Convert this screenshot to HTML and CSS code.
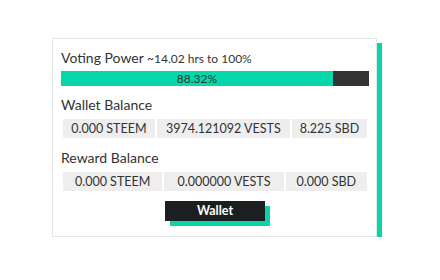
FILE: index.html
```html
<!DOCTYPE html>
<html>
<head>
    <title>Steem Wallet</title>
    <link rel="stylesheet" href="styles.css">
</head>
<body>
    <div class="card">
        <div class="title">Voting Power <small>~14.02 hrs to 100%</small></div>
        <div class="bar">
            <div class="fill" style="width: 88.32%">88.32%</div>
        </div>

        <div class="title gap">Wallet Balance</div>
        <table class="balances">
            <tr>
                <td>0.000 STEEM</td>
                <td>3974.121092 VESTS</td>
                <td>8.225 SBD</td>
            </tr>
        </table>

        <div class="title gap2">Reward Balance</div>
        <table class="balances">
            <tr>
                <td>0.000 STEEM</td>
                <td>0.000000 VESTS</td>
                <td>0.000 SBD</td>
            </tr>
        </table>

        <div class="actions">
            <a class="btn" href="#">Wallet</a>
        </div>
    </div>
</body>
</html>
```

FILE: styles.css
```css
body {
    margin: 0;
    padding: 38px 0 0 52px;
    font-family: Lato, "Liberation Sans", sans-serif;
    color: #333;
    background: #fff;
}
.card {
    box-sizing: border-box;
    width: 325px;
    padding: 10px 7px 15px 8px;
    border: 1px solid #e6e6e6;
    background: #fff;
    box-shadow: 5px 5px 0 #06d6a9;
}
.title {
    font-size: 14px;
    line-height: 18px;
}
.title small {
    font-size: 12px;
}
.title.gap {
    margin-top: 10px;
}
.title.gap2 {
    margin-top: 9px;
}
.bar {
    margin-top: 3px;
    height: 15px;
    background: #333;
}
.fill {
    height: 15px;
    background: #06d6a9;
    font-size: 12px;
    line-height: 15px;
    text-align: center;
    color: #333;
}
.balances {
    width: 100%;
    margin-top: 3px;
    border-spacing: 2px;
    border-collapse: separate;
}
.balances td {
    height: 19px;
    padding: 0 6px;
    background: #eee;
    font-size: 12.5px;
    text-align: center;
    white-space: nowrap;
}
.actions {
    display: flex;
    justify-content: center;
    margin-top: 8px;
}
.btn {
    width: 100px;
    height: 20px;
    line-height: 20px;
    text-align: center;
    background: #1b1f22;
    color: #fff;
    font-size: 12.5px;
    font-weight: bold;
    text-decoration: none;
    box-shadow: 5px 5px 0 #06d6a9;
}
```
